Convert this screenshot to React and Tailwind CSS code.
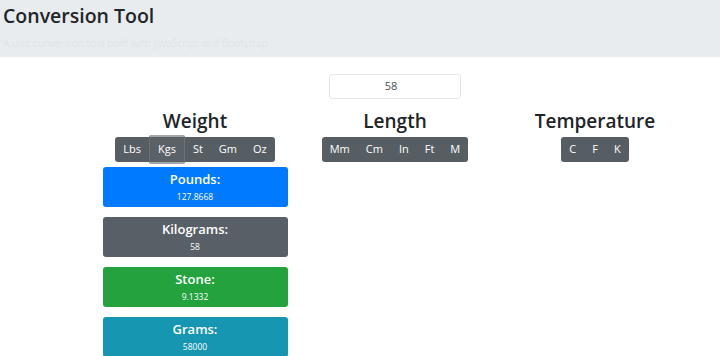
export default function App() {
  const font = { fontFamily: '"Open Sans", "Noto Sans", sans-serif' };
  const Group = ({ items, active }) => (
    <div className="flex rounded-[3px] bg-[#565e64] h-[25px] items-center">
      {items.map((t) => (
        <div
          key={t}
          className={
            "flex items-center px-[8px] text-[11px] text-white " +
            (t === active
              ? "bg-[#5a6167] border-y-2 border-x border-y-[#a3a8ac] border-x-[#6a7177] rounded-[2px] h-[29px]"
              : "h-full")
          }
        >
          {t}
        </div>
      ))}
    </div>
  );
  const Card = ({ title, value, bg }) => (
    <div className={"w-[185px] h-[40px] rounded-[3px] flex flex-col items-center justify-center text-white " + bg}>
      <div className="text-[13px] font-semibold leading-[17px]">{title}</div>
      <div className="text-[8.5px] leading-[14px] mt-[2px]">{value}</div>
    </div>
  );
  return (
    <div className="w-[720px] h-[356px] bg-white overflow-hidden relative" style={font}>
      <div className="h-[57px] bg-[#e9ecef] px-[3px] pt-[3px]">
        <div className="text-[19.5px] leading-[26px] font-semibold text-[#212529]">Conversion Tool</div>
        <div className="text-[10px] mt-[7px] text-[#e0e3e6]">A unit conversion tool built with JavaScript and Bootstrap</div>
      </div>
      <div className="ml-[95px] w-[600px] flex flex-col items-center">
        <div className="mt-[17px] w-[132px] h-[25px] border border-[#e3e6e9] rounded-[3px] flex items-center justify-center text-[11px] text-[#495057] pr-[8px]">
          58
        </div>
        <div className="w-full flex mt-[9px]">
          <div className="w-[200px] flex flex-col items-center">
            <div className="text-[19px] leading-[26px] font-semibold text-[#212529]">Weight</div>
            <div className="mt-[3px]">
              <Group items={["Lbs", "Kgs", "St", "Gm", "Oz"]} active="Kgs" />
            </div>
            <div className="flex flex-col gap-[10px] mt-[5px]">
              <Card title="Pounds:" value="127.8668" bg="bg-[#007bff]" />
              <Card title="Kilograms:" value="58" bg="bg-[#585f66]" />
              <Card title="Stone:" value="9.1332" bg="bg-[#23a23d]" />
              <Card title="Grams:" value="58000" bg="bg-[#1696b1]" />
            </div>
          </div>
          <div className="w-[200px] flex flex-col items-center">
            <div className="text-[19px] leading-[26px] font-semibold text-[#212529]">Length</div>
            <div className="mt-[3px]">
              <Group items={["Mm", "Cm", "In", "Ft", "M"]} />
            </div>
          </div>
          <div className="w-[200px] flex flex-col items-center">
            <div className="text-[19px] leading-[26px] font-semibold text-[#212529]">Temperature</div>
            <div className="mt-[3px]">
              <Group items={["C", "F", "K"]} />
            </div>
          </div>
        </div>
      </div>
    </div>
  );
}
